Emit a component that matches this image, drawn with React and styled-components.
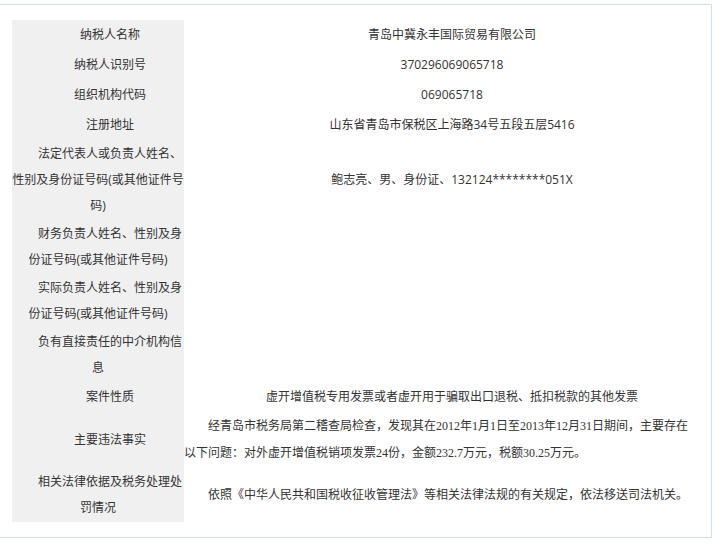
import React from 'react'
import styled, { createGlobalStyle } from 'styled-components'

const GlobalStyle = createGlobalStyle`
  body {
    margin: 0;
    background: #fff;
    color: #333;
    font-family: "Open Sans", "Noto Sans CJK SC", sans-serif;
    font-size: 12px;
  }
`

const Panel = styled.div`
  box-sizing: border-box;
  width: 712px;
  margin-top: 4px;
  padding: 15px 15px 15px 12px;
  border: 1px solid #cddff0;
  border-left: none;
`

const InfoGrid = styled.div`
  display: grid;
  grid-template-columns: 172px 512px;
`

const Cell = styled.div`
  display: flex;
  flex-direction: column;
  justify-content: center;
  min-height: 30px;
  padding: 1px 0;
  box-sizing: border-box;
  background: ${p => (p.$label ? '#f0f0f0' : '#fff')};
`

const Text = styled.p`
  margin: 0;
  line-height: ${p => (p.$plain ? '27px' : '26px')};
  text-indent: 2em;
  text-align: ${p => (p.$plain ? 'left' : 'center')};
  text-autospace: no-autospace;
  font-family: ${p =>
    p.$plain
      ? '"Liberation Serif", "Noto Sans CJK SC", serif'
      : '"Open Sans", "Noto Sans CJK SC", sans-serif'};
`

const rows = [
  ['纳税人名称', '青岛中冀永丰国际贸易有限公司'],
  ['纳税人识别号', '370296069065718'],
  ['组织机构代码', '069065718'],
  ['注册地址', '山东省青岛市保税区上海路34号五段五层5416'],
  ['法定代表人或负责人姓名、性别及身份证号码(或其他证件号码)', '鲍志亮、男、身份证、132124********051X'],
  ['财务负责人姓名、性别及身份证号码(或其他证件号码)', ''],
  ['实际负责人姓名、性别及身份证号码(或其他证件号码)', ''],
  ['负有直接责任的中介机构信息', ''],
  ['案件性质', '虚开增值税专用发票或者虚开用于骗取出口退税、抵扣税款的其他发票'],
  [
    '主要违法事实',
    '经青岛市税务局第二稽查局检查，发现其在2012年1月1日至2013年12月31日期间，主要存在以下问题：对外虚开增值税销项发票24份，金额232.7万元，税额30.25万元。',
    true,
  ],
  ['相关法律依据及税务处理处罚情况', '依照《中华人民共和国税收征收管理法》等相关法律法规的有关规定，依法移送司法机关。', true],
]

export default function App() {
  return (
    <>
      <GlobalStyle />
      <Panel>
        <InfoGrid>
          {rows.map(([label, value, plain]) => (
            <React.Fragment key={label}>
              <Cell $label>
                <Text>{label}</Text>
              </Cell>
              <Cell>
                <Text $plain={plain}>{value}</Text>
              </Cell>
            </React.Fragment>
          ))}
        </InfoGrid>
      </Panel>
    </>
  )
}
